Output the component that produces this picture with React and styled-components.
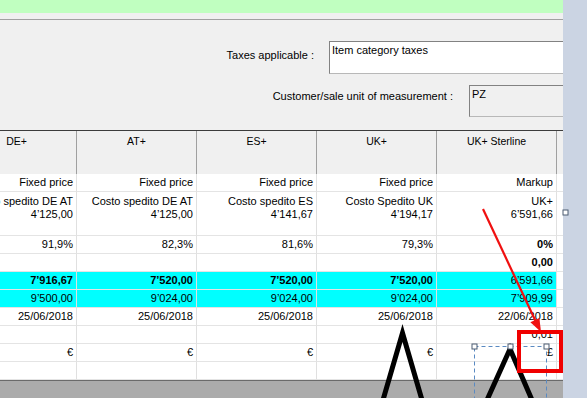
import React from 'react'
import styled, { createGlobalStyle } from 'styled-components'

const GlobalStyle = createGlobalStyle`
  html, body { margin: 0; padding: 0; background: #f0f0f0; }
  body { font-family: "Liberation Sans", Arial, sans-serif; }
`

const Page = styled.div`
  position: relative;
  display: flex;
  width: 587px;
  height: 398px;
  overflow: hidden;
`

const Main = styled.div`
  display: flex;
  flex-direction: column;
  width: 563px;
  overflow: hidden;
  background: #f0f0f0;
`

const SideStrip = styled.div`
  flex: 1;
  background: #cbd4e3;
`

const GreenBand = styled.div`
  height: 13px;
  background: #c0ffc0;
`

const Separator = styled.div`
  height: 1px;
  margin-top: 6px;
  background: #a0a0a0;
`

const Form = styled.div`
  height: 110px;
  padding-top: 21px;
  box-sizing: border-box;
  display: flex;
  flex-direction: column;
  gap: 11px;
`

const FieldRow = styled.div`
  display: flex;
  justify-content: flex-end;
  align-items: flex-start;
  gap: ${p => p.$gap}px;
`

const Label = styled.span`
  font-size: 11px;
  color: #000;
  padding-top: ${p => p.$top}px;
`

const TextBox = styled.div`
  width: ${p => p.$w}px;
  height: ${p => p.$h}px;
  margin-right: -6px;
  box-sizing: border-box;
  padding: 2px 2px;
  font-size: 11px;
  color: #000;
  background: ${p => (p.$disabled ? '#f0f0f0' : '#fff')};
  border: 1px solid #b8b8b8;
  border-top-color: #828282;
  border-left-color: #828282;
`

const Table = styled.div`
  margin-left: -43px;
  font-size: 11px;
  color: #000;
`

const HeaderRow = styled.div`
  display: grid;
  grid-template-columns: repeat(5, 120px) 20px;
  height: 44px;
  border-top: 1px solid #3c3c3c;
  box-sizing: border-box;
  font-size: 10.5px;
`

const HeadCell = styled.div`
  text-align: center;
  padding-top: 4px;
  background: #f0f0f0;
  border-right: 1px solid #a0a0a0;
`

const Row = styled.div`
  display: grid;
  grid-template-columns: repeat(5, 120px) 20px;
  height: ${p => p.$h || 18}px;
  background: ${p => (p.$cyan ? '#00ffff' : '#fff')};
`

const Cell = styled.div`
  box-sizing: border-box;
  text-align: right;
  padding: ${p => (p.$tall ? '3px' : '2px')} 3px 0 0;
  line-height: 13px;
  font-weight: ${p => (p.$bold ? 700 : 400)};
  border-right: 1px solid #e0e0e0;
  border-bottom: 1px solid #e4e4e4;
  white-space: pre;
`

const Filler = styled(Cell)`
  background: #fff;
`

const BottomBar = styled.div`
  flex: 1;
  background: #ababab;
  border-top: 1px solid #6a6a6a;
`

const Overlay = styled.svg`
  position: absolute;
  left: 0;
  top: 0;
  pointer-events: none;
`

const columns = ['DE+', 'AT+', 'ES+', 'UK+', 'UK+ Sterline']

// each row: values for the 5 columns; '*' prefix marks bold
const rows = [
  { cells: ['Fixed price', 'Fixed price', 'Fixed price', 'Fixed price', 'Markup'] },
  {
    h: 44,
    tall: true,
    cells: [
      'Costo spedito DE AT\n4\u2019125,00',
      'Costo spedito DE AT\n4\u2019125,00',
      'Costo spedito ES\n4\u2019141,67',
      'Costo Spedito UK\n4\u2019194,17',
      'UK+\n6\u2019591,66',
    ],
  },
  { cells: ['91,9%', '82,3%', '81,6%', '79,3%', '*0%'] },
  { cells: ['', '', '', '', '*0,00'] },
  { cyan: true, cells: ['*7\u2019916,67', '*7\u2019520,00', '*7\u2019520,00', '*7\u2019520,00', '6\u2019591,66'] },
  { cyan: true, cells: ['9\u2019500,00', '9\u2019024,00', '9\u2019024,00', '9\u2019024,00', '7\u2019909,99'] },
  { cells: ['25/06/2018', '25/06/2018', '25/06/2018', '25/06/2018', '22/06/2018'] },
  { cells: ['', '', '', '', '0,01'] },
  { cells: ['\u20ac', '\u20ac', '\u20ac', '\u20ac', '\u00a3'] },
  { cells: ['', '', '', '', ''] },
]

const Handle = ({ x, y }) => (
  <rect x={x - 2.5} y={y - 2.5} width="5" height="5" fill="#fff" stroke="#4d5d73" strokeWidth="1" />
)

const App = () => (
  <>
    <GlobalStyle />
    <Page>
      <Main>
        <GreenBand />
        <Separator />
        <Form>
          <FieldRow $gap={15}>
            <Label $top={8}>Taxes applicable :</Label>
            <TextBox $w={240} $h={33}>Item category taxes</TextBox>
          </FieldRow>
          <FieldRow $gap={16}>
            <Label $top={5}>Customer/sale unit of measurement :</Label>
            <TextBox $w={100} $h={32} $disabled>PZ</TextBox>
          </FieldRow>
        </Form>
        <Table>
          <HeaderRow>
            {columns.map(c => (
              <HeadCell key={c}>{c}</HeadCell>
            ))}
            <HeadCell />
          </HeaderRow>
          {rows.map((r, i) => (
            <Row key={i} $h={r.h} $cyan={r.cyan}>
              {r.cells.map((v, j) => {
                const bold = v.startsWith('*')
                return (
                  <Cell key={j} $bold={bold} $tall={r.tall}>
                    {bold ? v.slice(1) : v}
                  </Cell>
                )
              })}
              <Filler />
            </Row>
          ))}
        </Table>
        <BottomBar />
      </Main>
      <SideStrip />
      <Overlay width="587" height="398" viewBox="0 0 587 398">
        {/* selection frame */}
        <rect x="474.5" y="346.5" width="72" height="60" fill="none" stroke="#5a8ac2" strokeDasharray="4 3" />
        <Handle x={474.5} y={346.5} />
        <Handle x={546.5} y={346.5} />
        <Handle x={565.5} y={212.5} />
        {/* black peaks */}
        <polyline points="383,400 402.5,333 422,400" fill="none" stroke="#000" strokeWidth="5" strokeLinejoin="miter" />
        <polyline points="487,400 510,349 532,400" fill="none" stroke="#000" strokeWidth="5" strokeLinejoin="miter" />
        <Handle x={510.5} y={346.5} />
        {/* red annotation */}
        <line x1="483" y1="209" x2="536" y2="322" stroke="#f01010" strokeWidth="2.2" />
        <polygon points="541,332 530.4,322.2 539.4,318" fill="#f01010" />
        <rect x="519" y="332" width="42" height="39" fill="none" stroke="#f00000" strokeWidth="4" />
      </Overlay>
    </Page>
  </>
)

export default App
